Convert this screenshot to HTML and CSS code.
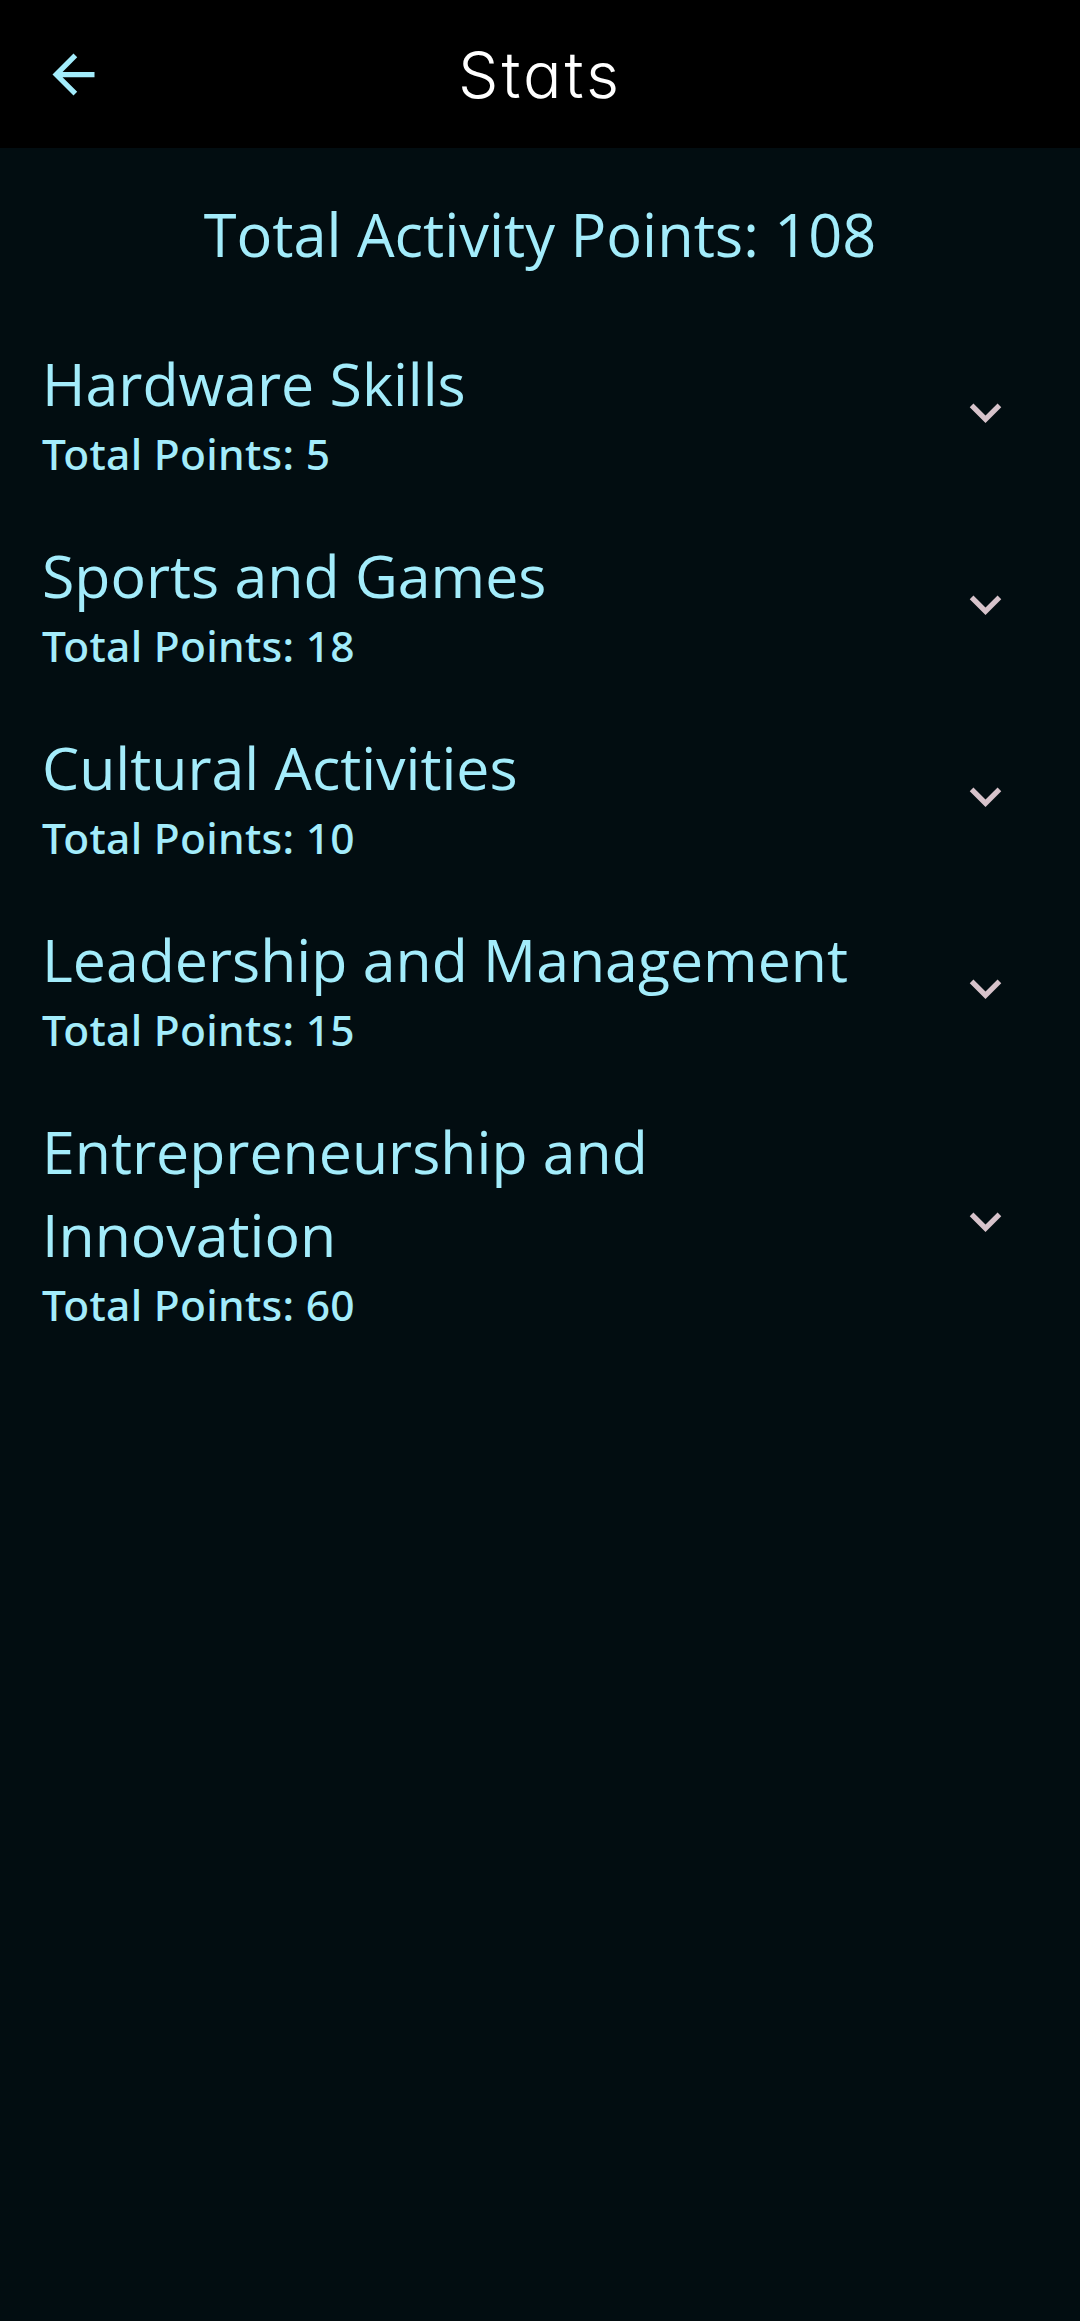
FILE: index.html
```
<!DOCTYPE html>
<html>
<head>
<meta charset="utf-8">
<link rel="stylesheet" href="styles.css">
</head>
<body>
<header class="appbar">
  <div class="back">
    <svg viewBox="0 0 24 24" width="63" height="63"><path fill="#a3ecfb" d="M20 11H7.83l5.59-5.59L12 4l-8 8 8 8 1.41-1.41L7.83 13H20v-2z"/></svg>
  </div>
  <div class="title">Stats</div>
</header>
<main class="content">
  <div class="total">Total Activity Points: 108</div>
  <div class="list">
    <div class="row">
      <div class="text"><div class="name">Hardware Skills</div><div class="pts">Total Points: 5</div></div>
      <svg class="chev" viewBox="0 0 24 24" width="63" height="63"><path fill="#d7c3cb" d="M16.59 8.59L12 13.17 7.41 8.59 6 10l6 6 6-6z"/></svg>
    </div>
    <div class="row">
      <div class="text"><div class="name">Sports and Games</div><div class="pts">Total Points: 18</div></div>
      <svg class="chev" viewBox="0 0 24 24" width="63" height="63"><path fill="#d7c3cb" d="M16.59 8.59L12 13.17 7.41 8.59 6 10l6 6 6-6z"/></svg>
    </div>
    <div class="row">
      <div class="text"><div class="name">Cultural Activities</div><div class="pts">Total Points: 10</div></div>
      <svg class="chev" viewBox="0 0 24 24" width="63" height="63"><path fill="#d7c3cb" d="M16.59 8.59L12 13.17 7.41 8.59 6 10l6 6 6-6z"/></svg>
    </div>
    <div class="row">
      <div class="text"><div class="name">Leadership and Management</div><div class="pts">Total Points: 15</div></div>
      <svg class="chev" viewBox="0 0 24 24" width="63" height="63"><path fill="#d7c3cb" d="M16.59 8.59L12 13.17 7.41 8.59 6 10l6 6 6-6z"/></svg>
    </div>
    <div class="row">
      <div class="text"><div class="name">Entrepreneurship and Innovation</div><div class="pts">Total Points: 60</div></div>
      <svg class="chev" viewBox="0 0 24 24" width="63" height="63"><path fill="#d7c3cb" d="M16.59 8.59L12 13.17 7.41 8.59 6 10l6 6 6-6z"/></svg>
    </div>
  </div>
</main>
</body>
</html>
```
FILE: styles.css
```
html, body {
  margin: 0;
  padding: 0;
}
body {
  background: #020d11;
  width: 1080px;
  min-height: 2321px;
  font-family: "Open Sans", "Noto Sans", sans-serif;
  color: #a3ecfb;
}
.appbar {
  height: 148px;
  background: #000000;
  display: flex;
  align-items: center;
  position: relative;
}
.back {
  width: 63px;
  height: 63px;
  margin-left: 42px;
  display: flex;
}
.title {
  position: absolute;
  left: 0;
  right: 0;
  top: 0;
  height: 148px;
  display: flex;
  align-items: center;
  justify-content: center;
  font-family: "Inter", "DejaVu Sans", sans-serif;
  font-feature-settings: "cv11" 1;
  font-weight: 300;
  font-size: 64px;
  letter-spacing: 3px;
  color: #ffffff;
  pointer-events: none;
}
.content {
  padding-top: 44px;
}
.total {
  text-align: center;
  font-size: 59.5px;
  line-height: 83px;
}
.list {
  padding-top: 41px;
}
.row {
  display: flex;
  align-items: center;
  padding: 26px 63px 26px 42px;
  gap: 42px;
}
.text {
  flex: 1;
}
.name {
  font-size: 59px;
  line-height: 83px;
}
.pts {
  font-family: "Noto Sans", "Open Sans", sans-serif;
  font-size: 42.5px;
  line-height: 57px;
  font-weight: 500;
  letter-spacing: 0.3px;
}
.chev {
  flex: none;
}
```
